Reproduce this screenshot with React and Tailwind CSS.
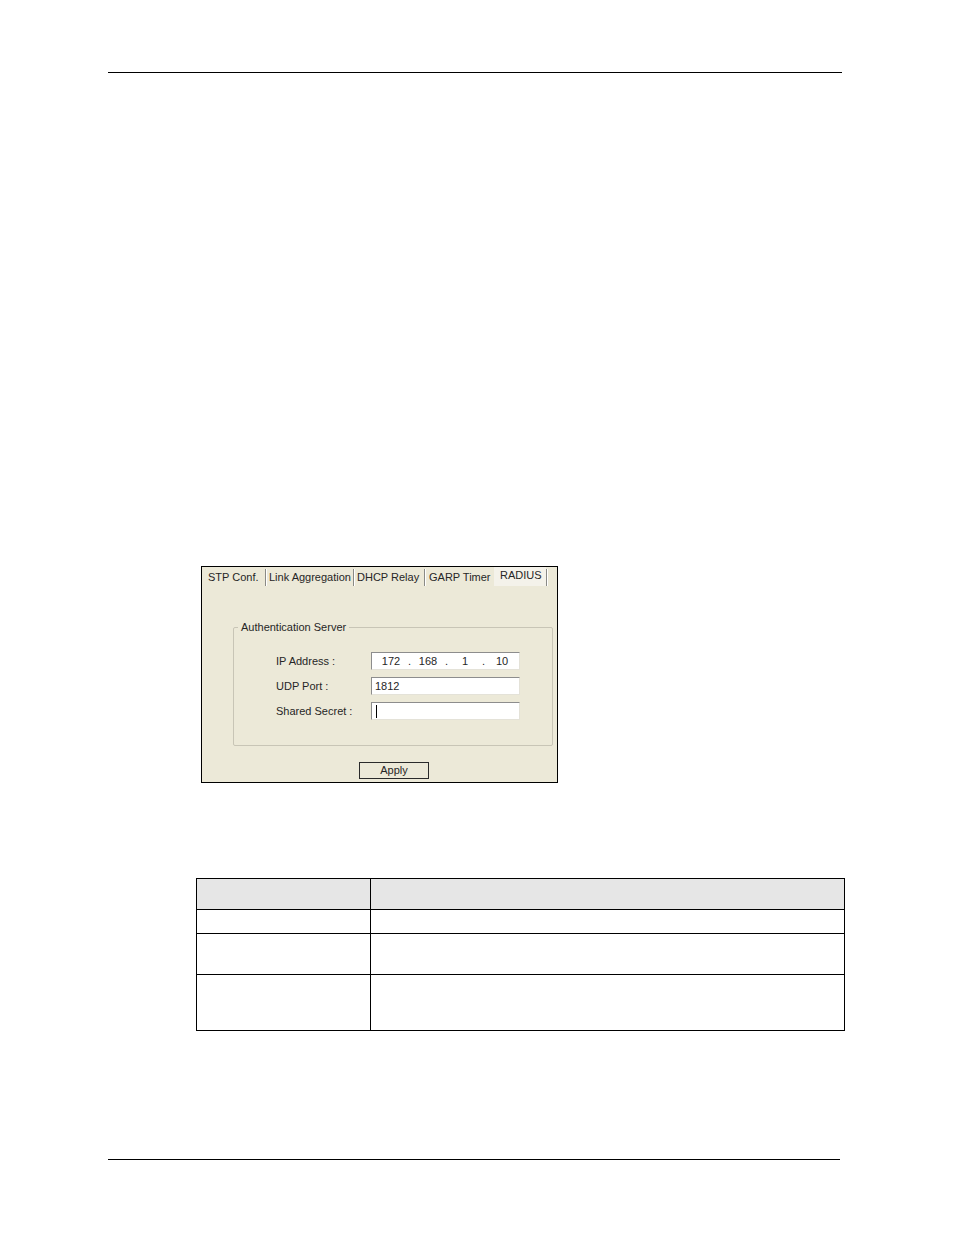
import React from "react";

function Sep() {
  return <div className="w-[2px] h-[17px] mt-[2px] border-l border-l-[#8a8a86] border-r border-r-white" />;
}

export default function App() {
  const font = "font-['Liberation_Sans',Arial,sans-serif]";
  return (
    <div className={`w-[954px] h-[1235px] bg-white flex flex-col ${font}`}>
      <div className="h-[72px]" />
      <div className="ml-[108px] w-[734px] h-px bg-black" />
      <div className="h-[493px]" />

      {/* Screenshot */}
      <div className="ml-[201px] w-[357px] h-[217px] border border-black bg-[#ece9d8] flex flex-col text-[11px] leading-[13px] text-[#262626]">
        <div className="flex h-[20px] items-start">
          <div className="w-[63px] pl-[6px] pt-[4px]">STP Conf.</div>
          <Sep />
          <div className="w-[86px] pl-[2px] pt-[4px]">Link Aggregation</div>
          <Sep />
          <div className="w-[69px] pl-[2px] pt-[4px]">DHCP Relay</div>
          <Sep />
          <div className="w-[68px] pl-[3px] pt-[4px]">GARP Timer</div>
          <div className="w-[52px] h-[19px] pl-[6px] pt-[2px] bg-[#f4f2ea]">RADIUS</div>
          <Sep />
        </div>

        {/* Group box */}
        <div className="relative ml-[31px] mt-[40px] w-[320px] h-[119px] border border-[#c8c5b6] rounded-[2px]">
          <div className="absolute left-[4px] top-[-7px] px-[3px] bg-[#ece9d8] leading-[13px]">
            Authentication Server
          </div>
          <div className="flex flex-col gap-[7px] pt-[24px] pl-[42px]">
            <div className="flex items-center h-[18px]">
              <div className="w-[95px]">IP Address :</div>
              <div className="w-[149px] h-[18px] bg-white border-t border-l border-t-[#8d8d8d] border-l-[#8d8d8d] border-r border-b border-r-[#e4e2d8] border-b-[#e4e2d8] flex items-center pl-[4px]">
                <span className="w-[30px] text-center">172</span>
                <span className="w-[7px] text-center">.</span>
                <span className="w-[30px] text-center">168</span>
                <span className="w-[7px] text-center">.</span>
                <span className="w-[30px] text-center">1</span>
                <span className="w-[7px] text-center">.</span>
                <span className="w-[30px] text-center">10</span>
              </div>
            </div>
            <div className="flex items-center h-[18px]">
              <div className="w-[95px]">UDP Port :</div>
              <div className="w-[149px] h-[18px] bg-white border-t border-l border-t-[#8d8d8d] border-l-[#8d8d8d] border-r border-b border-r-[#e4e2d8] border-b-[#e4e2d8] flex items-center pl-[3px]">
                1812
              </div>
            </div>
            <div className="flex items-center h-[18px]">
              <div className="w-[95px]">Shared Secret :</div>
              <div className="w-[149px] h-[18px] bg-white border-t border-l border-t-[#8d8d8d] border-l-[#8d8d8d] border-r border-b border-r-[#e4e2d8] border-b-[#e4e2d8] flex items-center pl-[4px]">
                <div className="w-px h-[13px] bg-black" />
              </div>
            </div>
          </div>
        </div>

        <div className="ml-[157px] mt-[16px] w-[70px] h-[17px] border border-[#2a2a2a] bg-[#ece9d8] flex items-center justify-center">
          Apply
        </div>
      </div>

      <div className="h-[95px]" />

      {/* Table */}
      <div className="ml-[196px] w-[649px] border border-black flex flex-col">
        <div className="flex h-[31px] border-b border-black bg-[#e6e6e6]">
          <div className="w-[174px] border-r border-black" />
          <div className="flex-1" />
        </div>
        <div className="flex h-[24px] border-b border-black">
          <div className="w-[174px] border-r border-black" />
          <div className="flex-1" />
        </div>
        <div className="flex h-[41px] border-b border-black">
          <div className="w-[174px] border-r border-black" />
          <div className="flex-1" />
        </div>
        <div className="flex h-[55px]">
          <div className="w-[174px] border-r border-black" />
          <div className="flex-1" />
        </div>
      </div>

      <div className="h-[128px]" />
      <div className="ml-[108px] w-[732px] h-px bg-black" />
    </div>
  );
}
